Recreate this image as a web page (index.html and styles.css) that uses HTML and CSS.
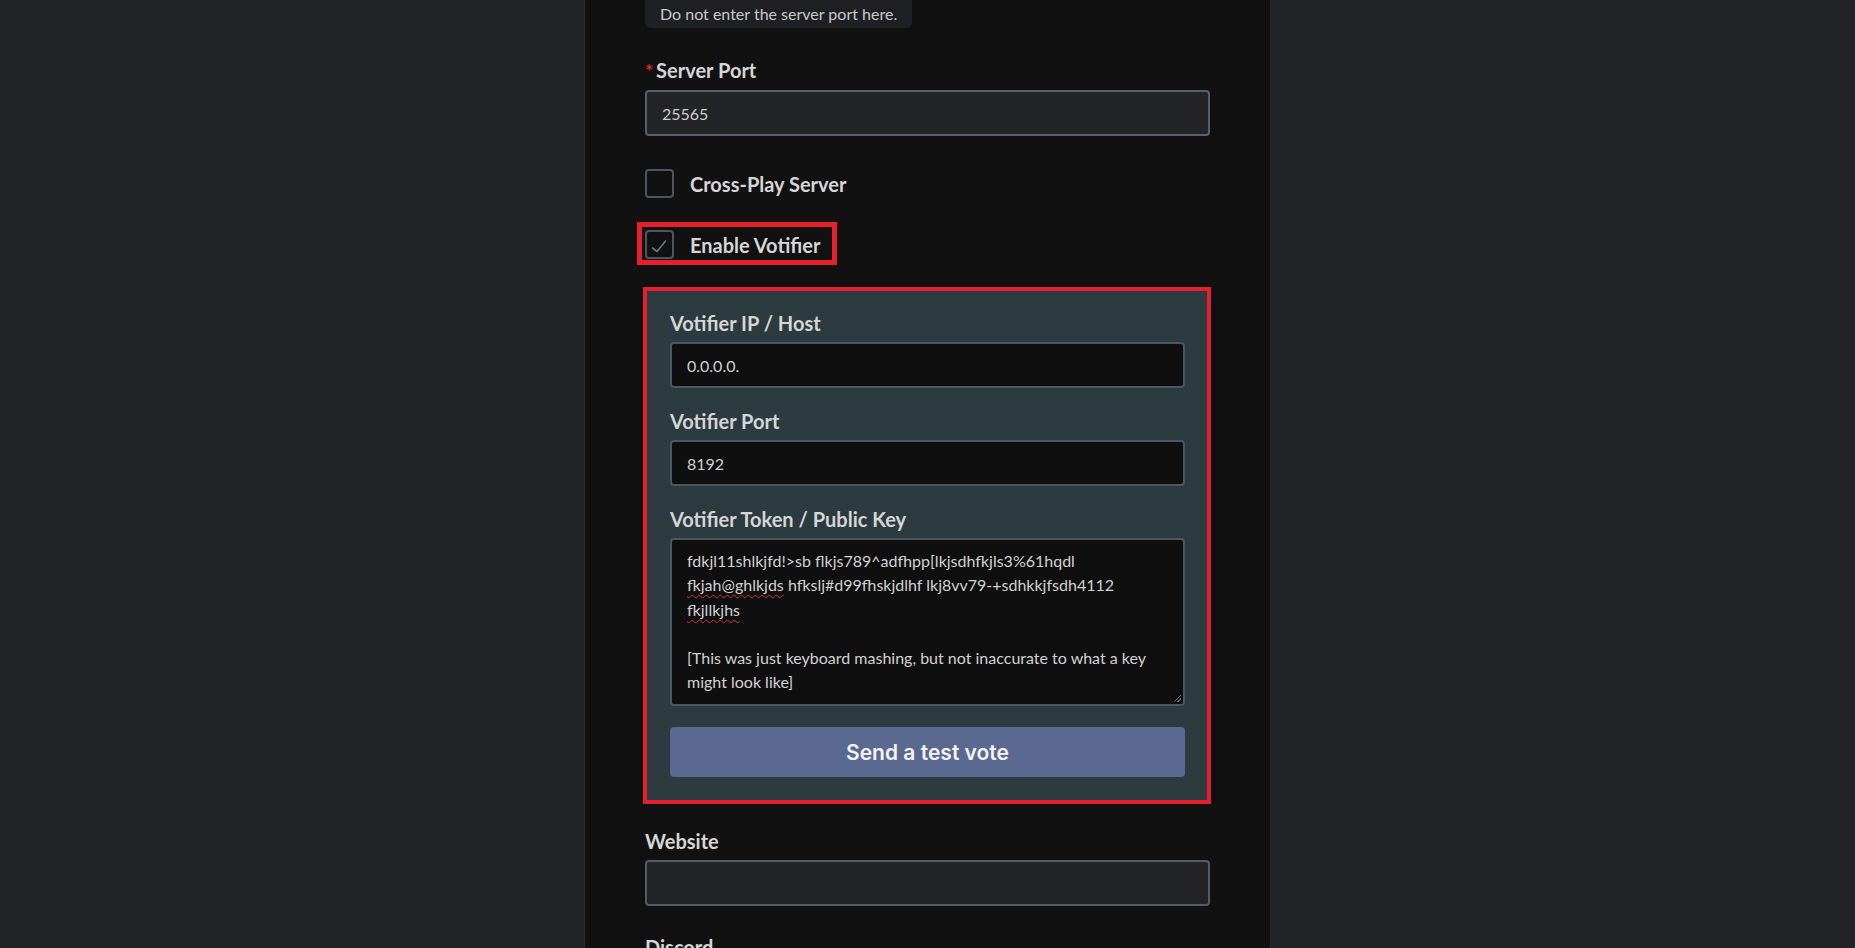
FILE: index.html
```html
<!DOCTYPE html>
<html lang="en">
<head>
  <meta charset="UTF-8">
  <meta name="viewport" content="width=device-width, initial-scale=1.0">
  <title>Server Settings</title>
  <link rel="stylesheet" href="styles.css">
</head>
<body>
  <main class="panel">
    <div class="hint">Do not enter the server port here.</div>

    <div class="field field-port">
      <label class="label" for="serverPort"><span class="req">*</span>Server Port</label>
      <input class="input" id="serverPort" type="text" value="25565">
    </div>

    <div class="check-row check-cross">
      <span class="box"></span>
      <span class="check-label">Cross-Play Server</span>
    </div>

    <div class="check-row check-votifier">
      <span class="box">
        <svg width="25" height="25" viewBox="0 0 25 25"><path d="M5.5 16 L10 19.5 L18.5 9" fill="none" stroke="#6e7381" stroke-width="1.6" stroke-linecap="round" stroke-linejoin="round"/></svg>
      </span>
      <span class="check-label">Enable Votifier</span>
    </div>

    <section class="votifier">
      <div class="field">
        <label class="label" for="votifierHost">Votifier IP / Host</label>
        <input class="input" id="votifierHost" type="text" value="0.0.0.0.">
      </div>
      <div class="field">
        <label class="label" for="votifierPort">Votifier Port</label>
        <input class="input" id="votifierPort" type="text" value="8192">
      </div>
      <div class="field">
        <label class="label">Votifier Token / Public Key</label>
        <div class="input textarea">fdkjl11shlkjfd!&gt;sb flkjs789^adfhpp[lkjsdhfkjls3%61hqdl<br><span class="typo">fkjah@ghlkjds</span> hfkslj#d99fhskjdlhf lkj8vv79-+sdhkkjfsdh4112<br><span class="typo">fkjllkjhs</span><br><br>[This was just keyboard mashing, but not inaccurate to what a key<br>might look like]</div>
      </div>
      <button class="btn" type="button">Send a test vote</button>
    </section>

    <div class="field field-website">
      <label class="label" for="website">Website</label>
      <input class="input" id="website" type="text" value="">
    </div>

    <div class="field field-discord">
      <label class="label" for="discord">Discord</label>
      <input class="input" id="discord" type="text" value="">
    </div>
  </main>
</body>
</html>
```

FILE: styles.css
```css
body {
  margin: 0;
  padding: 0;
  background-color: #222326;
  font-family: Lato, "Liberation Sans", sans-serif;
  color: #d6d6d6;
}
.panel {
  width: 565px;
  min-height: 100vh;
  margin: 0 auto;
  padding: 0 60px 40px;
  background-color: #111111;
  border-left: 1px solid #2c2c2e;
  border-right: 1px solid #2c2c2e;
}
.hint {
  width: fit-content;
  margin-top: -6px;
  padding: 10px 15px 4px;
  background-color: #1f2023;
  border-radius: 6px;
  font-size: 16px;
  line-height: 20px;
  color: #c9c9c9;
}
.label {
  display: block;
  margin-bottom: 7px;
  font-size: 20px;
  line-height: 24px;
  font-weight: 700;
  color: #d6d6d6;
}
.req {
  color: #e0262c;
  font-size: 19px;
  font-weight: 700;
  margin-right: 3px;
}
.input {
  display: block;
  box-sizing: border-box;
  width: 100%;
  height: 46px;
  padding: 0 15px;
  background-color: #232428;
  border: 2px solid #5a5f6d;
  border-radius: 4px;
  color: #cfcfcf;
  font-family: Lato, "Liberation Sans", sans-serif;
  font-size: 16px;
  outline: none;
}
.field-port {
  margin-top: 30px;
}
.check-row {
  display: flex;
  align-items: center;
  gap: 16px;
  width: fit-content;
  font-size: 20px;
  line-height: 24px;
  font-weight: 700;
}
.check-cross {
  margin-top: 33px;
}
.check-votifier {
  position: relative;
  margin-top: 32px;
}
/* red markup box drawn over the row */
.check-votifier::after {
  content: "";
  position: absolute;
  top: -8px;
  bottom: -6px;
  left: -8px;
  right: -17px;
  border: 5px solid #e3202b;
}
.box {
  display: block;
  box-sizing: border-box;
  width: 29px;
  height: 29px;
  border: 2px solid #4f545f;
  border-radius: 4px;
}
.box svg {
  display: block;
}
.votifier {
  margin: 28px -1px 0 -2px;
  padding: 20px 22px 23px 23px;
  background-color: #2b3b40;
  border: 4px solid #e3202b;
}
.votifier .field + .field {
  margin-top: 21px;
}
.votifier .input {
  background-color: #0f0f0f;
  border-color: #4b5765;
}
.textarea {
  position: relative;
  height: 168px;
  padding: 9px 15px;
  line-height: 24.3px;
  color: #d2d2d2;
  white-space: nowrap;
}
.textarea::after {
  content: "";
  position: absolute;
  right: 2px;
  bottom: 2px;
  width: 7px;
  height: 7px;
  background: linear-gradient(135deg, transparent 45%, #6a6a6a 46%, #6a6a6a 54%, transparent 55%, transparent 70%, #6a6a6a 71%, #6a6a6a 79%, transparent 80%);
}
.typo {
  text-decoration: underline wavy #d0302c;
  text-decoration-thickness: 1px;
  text-underline-offset: 3px;
}
.btn {
  display: block;
  width: 100%;
  height: 50px;
  margin-top: 21px;
  background-color: #5b6890;
  border: none;
  border-radius: 4px;
  color: #f4f4f4;
  font-family: Inter, "Open Sans", sans-serif;
  font-size: 21px;
  font-weight: 600;
}
.field-website {
  margin-top: 25px;
}
.field-website .input,
.field-discord .input {
  border-color: #555a69;
}
.field-discord {
  margin-top: 29px;
}
```
